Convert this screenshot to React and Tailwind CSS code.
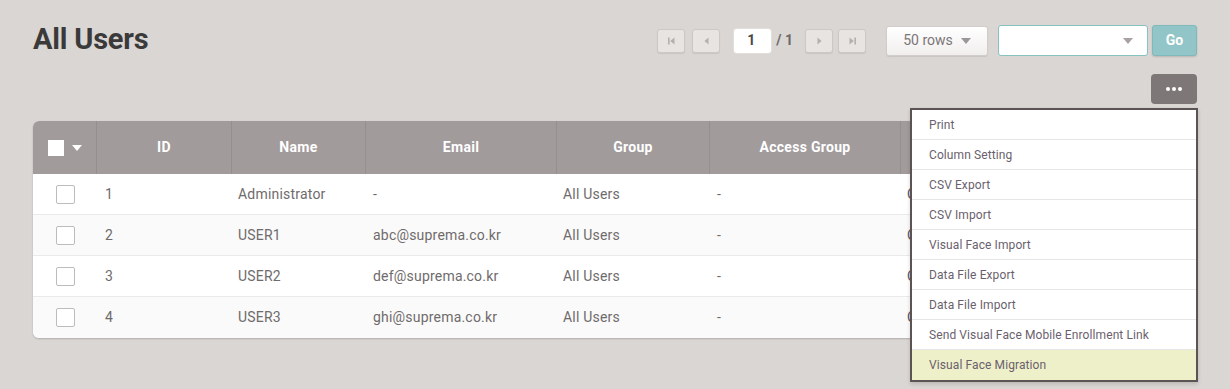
import React from 'react';

const cols = 'grid grid-cols-[64px_135px_134px_191px_153px_191px_1fr]';

const users = [
  { id: 1, name: 'Administrator', email: '-', group: 'All Users', access: '-', extra: 'Operator' },
  { id: 2, name: 'USER1', email: 'abc@suprema.co.kr', group: 'All Users', access: '-', extra: 'Operator' },
  { id: 3, name: 'USER2', email: 'def@suprema.co.kr', group: 'All Users', access: '-', extra: 'Operator' },
  { id: 4, name: 'USER3', email: 'ghi@suprema.co.kr', group: 'All Users', access: '-', extra: 'Operator' },
];

const menuItems = [
  'Print',
  'Column Setting',
  'CSV Export',
  'CSV Import',
  'Visual Face Import',
  'Data File Export',
  'Data File Import',
  'Send Visual Face Mobile Enrollment Link',
  'Visual Face Migration',
];

function PageBtn({ kind, className = '' }) {
  return (
    <button className={`h-[24px] w-[28px] rounded-[3px] border border-[#cdc8c6] bg-[#e7e4e2] shadow-[0_1px_1px_rgba(0,0,0,0.08)] flex items-center justify-center ${className}`}>
      <svg width="9" height="8" viewBox="0 0 9 8" fill="#b5afaf">
        {kind === 'first' && (<><rect x="1" y="0.5" width="1.6" height="7" /><path d="M7.5 0.5 L3.2 4 L7.5 7.5 Z" /></>)}
        {kind === 'prev' && <path d="M6.5 0.5 L2.5 4 L6.5 7.5 Z" />}
        {kind === 'next' && <path d="M2.5 0.5 L6.5 4 L2.5 7.5 Z" />}
        {kind === 'last' && (<><path d="M1.5 0.5 L5.8 4 L1.5 7.5 Z" /><rect x="6.4" y="0.5" width="1.6" height="7" /></>)}
      </svg>
    </button>
  );
}

function Caret({ color = '#9c9696' }) {
  return (
    <svg width="10" height="6" viewBox="0 0 10 6">
      <path d="M0 0 H10 L5 6 Z" fill={color} />
    </svg>
  );
}

export default function App() {
  return (
    <div className="relative w-[1230px] h-[389px] overflow-hidden bg-[#dad6d3] px-[33px] pt-[25px] font-['Roboto',sans-serif]">
      {/* Header */}
      <div className="flex items-start justify-between h-[31px]">
        <h1 className="text-[29px] leading-[28px] font-bold text-[#3b3a3a] tracking-[-0.2px]">All Users</h1>
        <div className="flex items-center h-[31px]">
          <PageBtn kind="first" />
          <PageBtn kind="prev" className="ml-[7px]" />
          <div className="ml-[14px] h-[24px] w-[37px] rounded-[3px] bg-white shadow-[0_0_0_1px_#e2dedc] flex items-center pl-[13px] text-[14px] font-bold text-[#4a4848]">1</div>
          <span className="ml-[5px] text-[14px] font-bold text-[#6d6868]">/ 1</span>
          <PageBtn kind="next" className="ml-[12px]" />
          <PageBtn kind="last" className="ml-[5px]" />
          <button className="ml-[20px] h-[30px] w-[102px] rounded-[3px] border border-[#d2cdcb] bg-gradient-to-b from-white to-[#f1efee] shadow-[0_1px_1px_rgba(0,0,0,0.08)] flex items-center justify-center gap-[8px] text-[14px] text-[#7b7676]">
            50 rows <Caret />
          </button>
          <div className="ml-[10px] h-[31px] w-[150px] rounded-[3px] border-[1.5px] border-[#86c2bf] bg-white flex items-center justify-end pr-[14px]">
            <Caret color="#a8a2a2" />
          </div>
          <button className="ml-[4px] h-[31px] w-[45px] rounded-[3px] border border-[#80b9bb] bg-[#92c5c7] shadow-[0_1px_2px_rgba(0,0,0,0.15)] text-[14px] font-bold text-white">
            Go
          </button>
        </div>
      </div>

      {/* More button */}
      <div className="mt-[18px] flex justify-end">
        <button className="h-[30px] w-[46px] rounded-[4px] bg-[#7e7778] flex items-center justify-center gap-[2px]">
          <span className="w-[4px] h-[4px] rounded-full bg-white" />
          <span className="w-[4px] h-[4px] rounded-full bg-white" />
          <span className="w-[4px] h-[4px] rounded-full bg-white" />
        </button>
      </div>

      {/* Table */}
      <div className="mt-[17px] rounded-[6px] overflow-hidden bg-white shadow-[0_1px_2px_rgba(0,0,0,0.2)]">
        <div className={`${cols} h-[53px] bg-[#a29b9c] text-[14px] font-bold text-white tracking-[0.3px]`}>
          <div className="flex items-center justify-center gap-[8px] border-r border-[#968f90]">
            <span className="w-[16px] h-[16px] bg-white" />
            <Caret color="#ffffff" />
          </div>
          {['ID', 'Name', 'Email', 'Group', 'Access Group', ''].map((h, i) => (
            <div key={i} className={`flex items-center justify-center ${i < 5 ? 'border-r border-[#968f90]' : ''}`}>{h}</div>
          ))}
        </div>
        {users.map((u, i) => (
          <div key={u.id} className={`${cols} h-[41px] text-[14px] text-[#6f6b6b] tracking-[0.2px] ${i % 2 ? 'bg-[#fafafa]' : 'bg-white'} ${i < 3 ? 'border-b border-[#ebe9e9]' : ''}`}>
            <div className="flex items-center justify-center">
              <span className="w-[19px] h-[19px] rounded-[2px] border border-[#bfbbbb] bg-white" />
            </div>
            <div className="flex items-center pl-[8px]">{u.id}</div>
            <div className="flex items-center pl-[6px]">{u.name}</div>
            <div className="flex items-center pl-[7px]">{u.email}</div>
            <div className="flex items-center pl-[6px]">{u.group}</div>
            <div className="flex items-center pl-[7px]">{u.access}</div>
            <div className="flex items-center pl-[6px]">
              <span className="block w-[3px] overflow-hidden whitespace-nowrap text-[#5e5260]">{u.extra}</span>
            </div>
          </div>
        ))}
      </div>

      {/* Dropdown menu */}
      <div className="absolute left-[910px] top-[108px] w-[288px] border-2 border-[#5b5354] bg-white shadow-[0_2px_4px_rgba(0,0,0,0.15)]">
        {menuItems.map((m, i) => (
          <div
            key={m}
            className={`h-[30px] flex items-center pl-[17px] text-[12px] tracking-[0.1px] text-[#6b5f6e] ${i < menuItems.length - 1 ? 'border-b border-[#e7e5e5]' : 'bg-[#eef0c9]'}`}
          >
            {m}
          </div>
        ))}
      </div>
    </div>
  );
}
